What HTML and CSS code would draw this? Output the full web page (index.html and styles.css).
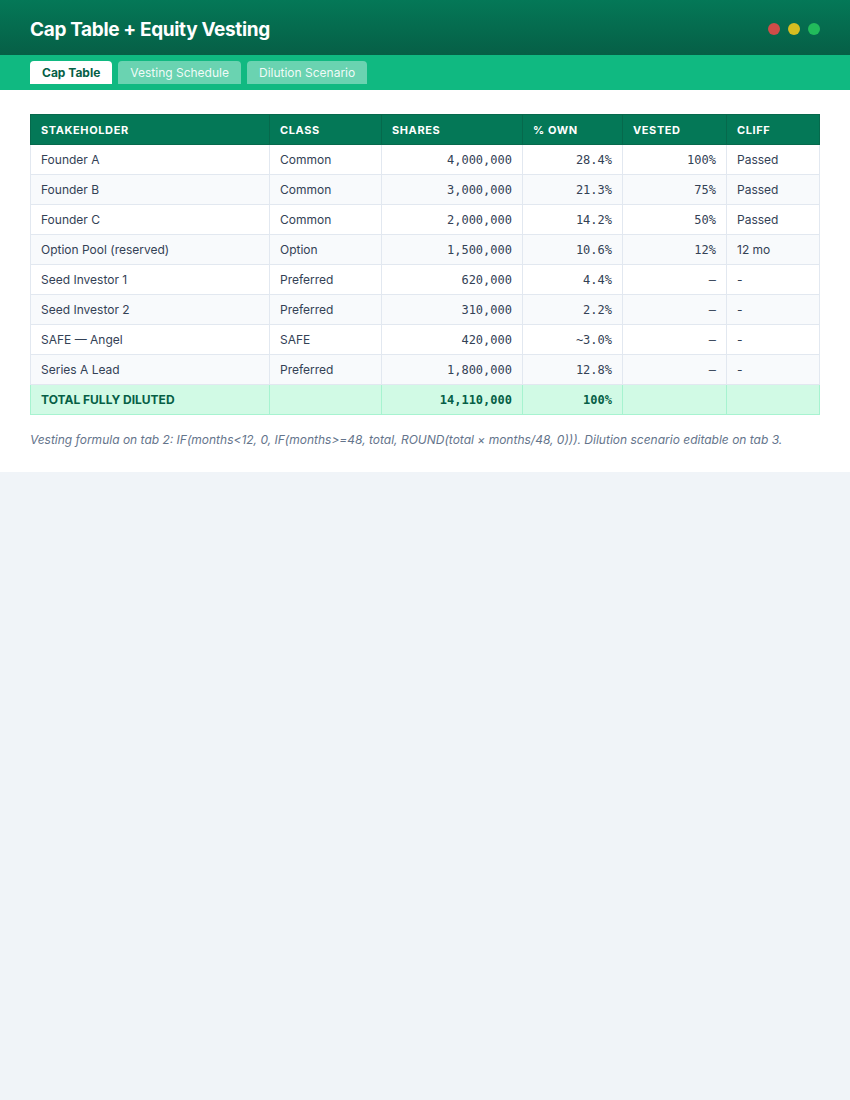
FILE: index.html
```html
<!DOCTYPE html>
<html>
<head>
<meta charset="utf-8">
<link rel="stylesheet" href="styles.css">
</head>
<body>
<header class="topbar">
  <h1 class="title">Cap Table + Equity Vesting</h1>
  <div class="dots"><span class="dot red"></span><span class="dot yellow"></span><span class="dot green"></span></div>
</header>
<nav class="tabs">
  <span class="tab active">Cap Table</span>
  <span class="tab">Vesting Schedule</span>
  <span class="tab">Dilution Scenario</span>
</nav>
<main class="panel">
  <table class="cap">
    <colgroup>
      <col class="c1"><col class="c2"><col class="c3"><col class="c4"><col class="c5"><col class="c6">
    </colgroup>
    <thead>
      <tr><th>Stakeholder</th><th>Class</th><th>Shares</th><th>% Own</th><th>Vested</th><th>Cliff</th></tr>
    </thead>
    <tbody>
      <tr><td>Founder A</td><td>Common</td><td class="num">4,000,000</td><td class="num">28.4%</td><td class="num">100%</td><td>Passed</td></tr>
      <tr><td>Founder B</td><td>Common</td><td class="num">3,000,000</td><td class="num">21.3%</td><td class="num">75%</td><td>Passed</td></tr>
      <tr><td>Founder C</td><td>Common</td><td class="num">2,000,000</td><td class="num">14.2%</td><td class="num">50%</td><td>Passed</td></tr>
      <tr><td>Option Pool (reserved)</td><td>Option</td><td class="num">1,500,000</td><td class="num">10.6%</td><td class="num">12%</td><td>12 mo</td></tr>
      <tr><td>Seed Investor 1</td><td>Preferred</td><td class="num">620,000</td><td class="num">4.4%</td><td class="num">–</td><td>-</td></tr>
      <tr><td>Seed Investor 2</td><td>Preferred</td><td class="num">310,000</td><td class="num">2.2%</td><td class="num">–</td><td>-</td></tr>
      <tr><td>SAFE — Angel</td><td>SAFE</td><td class="num">420,000</td><td class="num">~3.0%</td><td class="num">–</td><td>-</td></tr>
      <tr><td>Series A Lead</td><td>Preferred</td><td class="num">1,800,000</td><td class="num">12.8%</td><td class="num">–</td><td>-</td></tr>
      <tr class="total"><td>TOTAL FULLY DILUTED</td><td></td><td class="num">14,110,000</td><td class="num">100%</td><td></td><td></td></tr>
    </tbody>
  </table>
  <p class="note">Vesting formula on tab 2: IF(months&lt;12, 0, IF(months&gt;=48, total, ROUND(total × months/48, 0))). Dilution scenario editable on tab 3.</p>
</main>
</body>
</html>
```
FILE: styles.css
```css
* { box-sizing: border-box; }
html, body { margin: 0; padding: 0; }
body {
  background: #f0f4f8;
  font-family: Inter, "Noto Sans", sans-serif;
  color: #334155;
}
.topbar {
  height: 55px;
  background: linear-gradient(180deg, #047857 0%, #065f46 100%);
  display: flex;
  align-items: center;
  justify-content: space-between;
  padding: 3px 30px 0;
}
.title {
  margin: 0;
  color: #ffffff;
  font-size: 19px;
  font-weight: 700;
  letter-spacing: -0.35px;
}
.dots { display: flex; gap: 8px; }
.dot { width: 12px; height: 12px; border-radius: 50%; display: block; }
.red { background: #cf4c48; }
.yellow { background: #d6bd21; }
.green { background: #22bb5b; }
.tabs {
  background: #10b981;
  height: 35px;
  padding: 6px 30px 0;
  display: flex;
  gap: 6px;
}
.tab {
  height: 23px;
  padding: 0 12px;
  display: flex;
  align-items: center;
  font-size: 12px;
  color: rgba(255,255,255,0.92);
  background: rgba(255,255,255,0.38);
  border-radius: 4px 4px 0 0;
}
.tab.active {
  background: #ffffff;
  color: #065f46;
  font-weight: 700;
}
.panel {
  background: #ffffff;
  padding: 24px 30px 25px;
}
.cap {
  width: 789px;
  border-collapse: collapse;
  font-size: 12px;
  table-layout: fixed;
}
.c1 { width: 239px; }
.c2 { width: 112px; }
.c3 { width: 141px; }
.c4 { width: 100px; }
.c5 { width: 104px; }
.c6 { width: 93px; }
.cap th {
  background: #047857;
  color: #ffffff;
  text-align: left;
  text-transform: uppercase;
  font-size: 11px;
  font-weight: 700;
  letter-spacing: 0.6px;
  height: 30px;
  padding: 0 10px;
  border: 1px solid #06694c;
}
.cap td {
  height: 30px;
  padding: 0 10px;
  border: 1px solid #e2e8f0;
  color: #334155;
  white-space: nowrap;
}
.cap tbody tr:nth-child(even) td { background: #f8fafc; }
.cap td.num {
  text-align: right;
  font-family: "DejaVu Sans Mono", monospace;
  font-size: 12px;
}
.cap tr.total td {
  background: #d1fae5;
  border-color: #a7f3d0;
  color: #065f46;
  font-weight: 700;
}
.note {
  margin: 17px 0 0;
  font-size: 12px;
  font-style: italic;
  color: #64748b;
}
```
